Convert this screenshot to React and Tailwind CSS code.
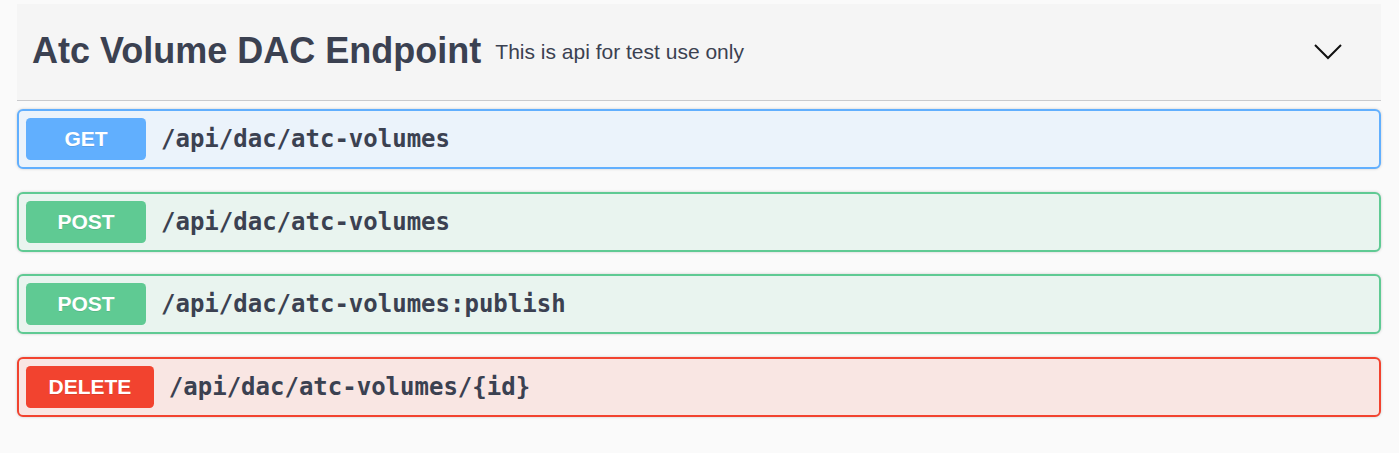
import React from "react";

const ops = [
  { method: "GET", path: "/api/dac/atc-volumes", row: "bg-[#ebf3fb] border-[#61affe]", badge: "bg-[#61affe]" },
  { method: "POST", path: "/api/dac/atc-volumes", row: "bg-[#e9f4ef] border-[#5fca93]", badge: "bg-[#5fca93]" },
  { method: "POST", path: "/api/dac/atc-volumes:publish", row: "bg-[#e9f4ef] border-[#5fca93]", badge: "bg-[#5fca93]" },
  { method: "DELETE", path: "/api/dac/atc-volumes/{id}", row: "bg-[#f9e6e3] border-[#f2432f]", badge: "bg-[#f2432f]" },
];

function Chevron() {
  return (
    <svg width="30" height="30" viewBox="0 0 30 30" fill="none">
      <path d="M2 9 L15 22 L28 9" stroke="#111" strokeWidth="2" />
    </svg>
  );
}

export default function App() {
  return (
    <div className="min-h-screen bg-[#fafafa] pt-[4px] pl-[17px] pr-[18px] font-['Liberation_Sans',Arial,sans-serif] text-[#3b4151]">
      {/* Tag header */}
      <div className="flex items-center h-[97px] bg-[#f5f5f5] border-b-[1.5px] border-[#c9cacd] pl-[15px] pr-[38px] pb-[2px] mb-[8px]">
        <h3 className="text-[36px] font-bold leading-none">Atc Volume DAC Endpoint</h3>
        <span className="ml-[14px] text-[21px] leading-none">This is api for test use only</span>
        <button className="ml-auto">
          <Chevron />
        </button>
      </div>

      {/* Operations */}
      {ops.map((op, i) => (
        <div
          key={i}
          className={`flex items-center h-[60px] border-2 rounded-[6px] p-[7px] mb-[22.5px] shadow-[0_0_3px_rgba(0,0,0,0.19)] ${op.row}`}
        >
          <span
            className={`min-w-[120px] h-[42px] px-[22.5px] flex items-center justify-center rounded-[4.5px] text-white text-[21px] font-bold [text-shadow:0_1px_0_rgba(0,0,0,0.1)] ${op.badge}`}
          >
            {op.method}
          </span>
          <span className="pl-[15px] font-['DejaVu_Sans_Mono',monospace] font-bold text-[24px] text-[#3b4151]">
            {op.path}
          </span>
        </div>
      ))}
    </div>
  );
}
